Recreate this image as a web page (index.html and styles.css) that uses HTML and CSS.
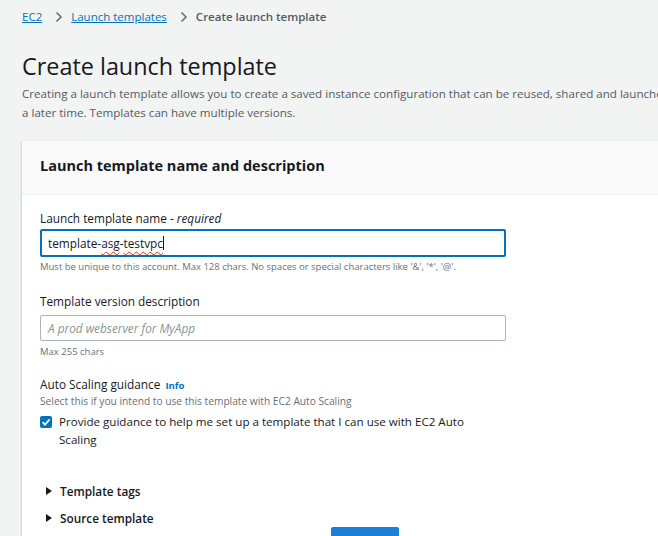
FILE: index.html
```html
<!DOCTYPE html>
<html lang="en">
<head>
<meta charset="utf-8">
<title>Create launch template</title>
<link rel="stylesheet" href="styles.css">
</head>
<body>
<div class="page">
  <nav class="breadcrumb">
    <a href="#" class="crumb-link">EC2</a>
    <svg class="crumb-sep" width="8" height="12" viewBox="0 0 8 12"><path d="M1.5 1.5 6 6l-4.5 4.5" fill="none" stroke="#687078" stroke-width="1.6"/></svg>
    <a href="#" class="crumb-link">Launch templates</a>
    <svg class="crumb-sep" width="8" height="12" viewBox="0 0 8 12"><path d="M1.5 1.5 6 6l-4.5 4.5" fill="none" stroke="#687078" stroke-width="1.6"/></svg>
    <span class="crumb-current">Create launch template</span>
  </nav>

  <h1 class="title">Create launch template</h1>
  <p class="desc">Creating a launch template allows you to create a saved instance configuration that can be reused, shared and launched at<br>a later time. Templates can have multiple versions.</p>

  <section class="card">
    <header class="card-header">
      <h2 class="card-title">Launch template name and description</h2>
    </header>
    <div class="card-body">
      <div class="field">
        <label class="label">Launch template name - <i>required</i></label>
        <div class="input input-focus">template-<span class="typo">asg</span>-<span class="typo">testvpc</span><span class="caret"></span></div>
        <div class="hint">Must be unique to this account. Max 128 chars. No spaces or special characters like '&amp;', '*', '@'.</div>
      </div>

      <div class="field field-2">
        <label class="label">Template version description</label>
        <div class="input"><span class="placeholder">A prod webserver for MyApp</span></div>
        <div class="hint">Max 255 chars</div>
      </div>

      <div class="field field-3">
        <div class="label label-tight">Auto Scaling guidance <a href="#" class="info">Info</a></div>
        <div class="hint hint-tight">Select this if you intend to use this template with EC2 Auto Scaling</div>
        <div class="check-row">
          <span class="checkbox"><svg width="12" height="12" viewBox="0 0 12 12"><path d="M2.6 6.2 5 8.6 9.6 3.4" fill="none" stroke="#fff" stroke-width="1.8"/></svg></span>
          <span class="check-text">Provide guidance to help me set up a template that I can use with EC2 Auto Scaling</span>
        </div>
      </div>

      <div class="expander expander-first"><span class="tri"></span>Template tags</div>
      <div class="expander"><span class="tri"></span>Source template</div>

      <div class="actions">
        <button class="btn-primary">Create</button>
      </div>
    </div>
  </section>
</div>
</body>
</html>
```

FILE: styles.css
```css
* { box-sizing: border-box; }

html, body {
  margin: 0;
  padding: 0;
  overflow: hidden;
}

body {
  background: #f2f3f3;
  font-family: "Open Sans", "Noto Sans", Arial, sans-serif;
  color: #16191f;
  font-size: 12px;
}

.page {
  width: 760px;
  padding: 8px 0 0 22px;
}

.breadcrumb {
  display: flex;
  align-items: center;
  height: 18px;
  font-size: 11.5px;
  line-height: 18px;
}

.crumb-link {
  color: #0073bb;
  text-decoration: underline;
}

.crumb-sep {
  margin: 0 8px 0 13px;
}

.crumb-current {
  color: #545b64;
  font-weight: 600;
}

.title {
  margin: 25px 0 0 0;
  font-size: 23.4px;
  line-height: 30px;
  font-weight: 400;
  color: #16191f;
}

.desc {
  margin: 3px 0 0 0;
  font-size: 11.6px;
  line-height: 19px;
  color: #545b64;
  white-space: nowrap;
}

.card {
  margin-top: 19px;
  background: #fff;
  box-shadow: 0 1px 2px rgba(0, 28, 36, 0.25), -1px 0 2px rgba(0, 28, 36, 0.06);
}

.card-header {
  height: 54px;
  padding: 0 18px 4px 18px;
  display: flex;
  align-items: center;
  background: #fafafa;
  border-bottom: 1px solid #eaeded;
}

.card-title {
  margin: 0;
  font-size: 14.5px;
  font-weight: 700;
  line-height: 20px;
}

.card-body {
  padding: 14px 18px 0 18px;
}

.field {
  display: flex;
  flex-direction: column;
  align-items: flex-start;
}

.label {
  font-size: 11.8px;
  line-height: 18px;
  margin-bottom: 2px;
  color: #16191f;
}

.label i {
  font-style: italic;
}

.input {
  width: 466px;
  height: 28px;
  border: 1px solid #aab7b8;
  border-radius: 2px;
  background: #fff;
  padding: 0 7px;
  display: flex;
  align-items: center;
  font-size: 11.8px;
  color: #16191f;
}

.input-focus {
  border: 2px solid #0073bb;
  padding: 0 6px;
}

.typo {
  text-decoration: underline wavy #d13212;
  text-decoration-thickness: 1px;
  text-underline-offset: 3px;
}

.caret {
  display: inline-block;
  width: 1px;
  height: 14px;
  background: #16191f;
}

.placeholder {
  color: #879596;
  font-style: italic;
}

.hint {
  font-size: 9.5px;
  line-height: 16px;
  margin-top: 2px;
  color: #687078;
}

.field-2 {
  margin-top: 17px;
}

.field-2 .label {
  margin-bottom: 5px;
}

.field-2 .input {
  height: 26px;
}

.field-2 .hint {
  margin-top: 3px;
}

.field-3 {
  margin-top: 15px;
}

.label-tight {
  line-height: 16px;
  margin-bottom: 0;
  margin-top: 1px;
}

.info {
  color: #0073bb;
  font-weight: 700;
  font-size: 9.6px;
  text-decoration: none;
  margin-left: 2px;
}

.hint-tight {
  margin-top: 0;
  font-size: 10.2px;
  line-height: 14px;
}

.check-row {
  display: flex;
  align-items: flex-start;
  margin-top: 5px;
  width: 450px;
}

.checkbox {
  flex: none;
  width: 12px;
  height: 12px;
  margin-top: 3px;
  border-radius: 2px;
  background: #0073bb;
  display: flex;
}

.check-text {
  margin-left: 7px;
  font-size: 11.6px;
  line-height: 18px;
  color: #16191f;
}

.expander {
  display: flex;
  align-items: center;
  font-size: 11.8px;
  font-weight: 600;
  line-height: 20px;
  margin-top: 7px;
  color: #16191f;
}

.expander-first {
  margin-top: 32px;
}

.tri {
  width: 0;
  height: 0;
  border-top: 4px solid transparent;
  border-bottom: 4px solid transparent;
  border-left: 6px solid #16191f;
  margin: 0 8px 0 6px;
}

.actions {
  display: flex;
  align-items: flex-start;
  margin-top: -1px;
  padding-left: 291px;
  height: 40px;
}

.btn-primary {
  width: 68px;
  height: 30px;
  border: none;
  border-radius: 2px;
  background: #1a7fd6;
  color: #fff;
  font-family: inherit;
  font-size: 12px;
  font-weight: 700;
}
```
